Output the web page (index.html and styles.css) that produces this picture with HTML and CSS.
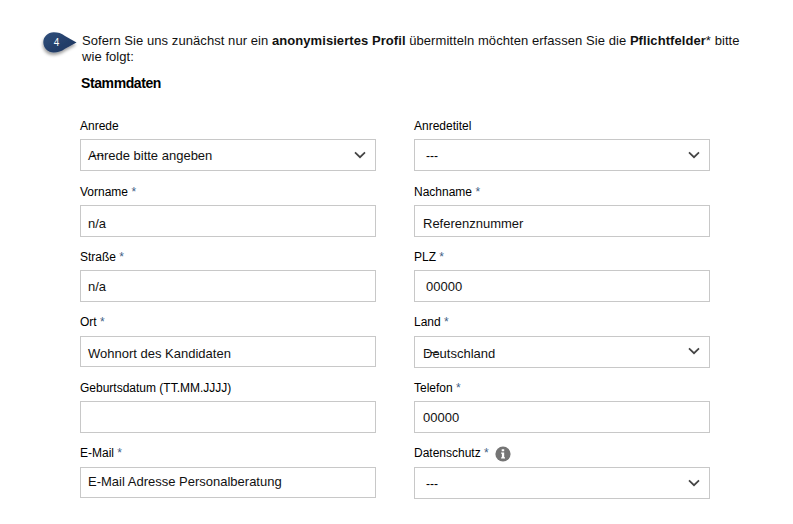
FILE: index.html
```
<!DOCTYPE html>
<html lang="de">
<head>
<meta charset="utf-8">
<title>Stammdaten</title>
<link rel="stylesheet" href="styles.css">
</head>
<body>
<main class="page">
  <header class="intro">
    <svg class="marker" width="40" height="32" viewBox="0 0 40 32">
      <defs>
        <linearGradient id="navy" x1="0" y1="0" x2="1" y2="1"><stop offset="0" stop-color="#304f7c"/><stop offset="1" stop-color="#1b335c"/></linearGradient>
        <filter id="shade" x="-30%" y="-30%" width="160%" height="170%"><feDropShadow dx="-0.5" dy="2.5" stdDeviation="1.7" flood-color="#000" flood-opacity=".38"/></filter>
      </defs>
      <path d="M36.500 12.400L25 6.100C21.500 3.200 18 2.300 13.800 2.300C7.800 2.300 3.300 6.700 3.300 12.300C3.300 18 7.800 22.500 13.800 22.500C18 22.500 21.500 21.300 25 18.700Z" fill="url(#navy)" filter="url(#shade)"/>
      <text class="marker-number" x="16.500" y="15.800" text-anchor="middle">4</text>
    </svg>
    <p class="intro-text">Sofern Sie uns zunächst nur ein <b>anonymisiertes Profil</b> übermitteln möchten erfassen Sie die <b>Pflichtfelder</b>* bitte<br>wie folgt:</p>
  </header>
  <h1 class="title">Stammdaten</h1>
  <form class="fields">
    <div class="field"><div class="label">Anrede</div>
      <div class="box"><span class="ghost">---</span><span class="value">Anrede bitte angeben</span><svg class="chevron" viewBox="0 0 12 8"><path d="M1 1.300L6 6.200L11 1.300"/></svg></div></div>
    <div class="field"><div class="label">Anredetitel</div>
      <div class="box"><span class="value dashes">---</span><svg class="chevron" viewBox="0 0 12 8"><path d="M1 1.300L6 6.200L11 1.300"/></svg></div></div>
    <div class="field"><div class="label">Vorname <i>*</i></div>
      <div class="box"><span class="value low">n/a</span></div></div>
    <div class="field"><div class="label">Nachname <i>*</i></div>
      <div class="box"><span class="value low nudge">Referenznummer</span></div></div>
    <div class="field"><div class="label">Straße <i>*</i></div>
      <div class="box"><span class="value">n/a</span></div></div>
    <div class="field"><div class="label">PLZ <i>*</i></div>
      <div class="box"><span class="value indent">00000</span></div></div>
    <div class="field"><div class="label raised">Ort <i>*</i></div>
      <div class="box short"><span class="value low">Wohnort des Kandidaten</span></div></div>
    <div class="field"><div class="label raised">Land <i>*</i></div>
      <div class="box"><span class="ghost">---</span><span class="value lower nudge">Deutschland</span><svg class="chevron chevron-high" viewBox="0 0 12 8"><path d="M1 1.300L6 6.200L11 1.300"/></svg></div></div>
    <div class="field"><div class="label">Geburtsdatum (TT.MM.JJJJ)</div>
      <div class="box"></div></div>
    <div class="field"><div class="label">Telefon <i>*</i></div>
      <div class="box"><span class="value nudge">00000</span></div></div>
    <div class="field"><div class="label raised">E-Mail <i>*</i></div>
      <div class="box short"><span class="value high">E-Mail Adresse Personalberatung</span></div></div>
    <div class="field"><div class="label raised">Datenschutz <i>*</i><svg class="info" viewBox="0 0 16 16"><circle cx="8" cy="8" r="7.600"/><path d="M6.700 3.300h2.500v2H6.700zM6.100 6.500h3.100v4.700h.8v1.300H6.100v-1.300h.8V7.800h-.8z"/></svg></div>
      <div class="box"><span class="value dashes">---</span><svg class="chevron" viewBox="0 0 12 8"><path d="M1 1.300L6 6.200L11 1.300"/></svg></div></div>
  </form>
</main>
</body>
</html>
```
FILE: styles.css
```
* { box-sizing: border-box; }
body { margin: 0; background: #fff; color: #111; font-family: "Liberation Sans", Arial, sans-serif; }
.page { padding: 30px 0 0 40px; }
.intro { display: flex; height: 43px; }
.marker { flex: none; width: 40px; height: 32px; overflow: visible; }
.marker-number { fill: #fff; font-size: 10px; }
.intro-text { margin: 3px 0 0 2px; font-size: 13px; line-height: 16px; letter-spacing: 0.065px; white-space: nowrap; }
.title { margin: 2px 0 0 41px; height: 44px; font-size: 14px; line-height: 16px; letter-spacing: -0.4px; color: #000; }
.fields { margin-left: 40px; display: grid; grid-template-columns: 296px 296px; column-gap: 38px; grid-template-rows: 66px 65px 66px 65px 66px 52px; }
.label { display: flex; align-items: center; height: 20px; padding-bottom: 6px; font-size: 12px; line-height: 14px; color: #000; white-space: pre; }
.label i { color: #3f6186; font-style: normal; }
.raised { height: 19px; margin: -1px 0 2px; padding-bottom: 5px; }
.box { position: relative; display: flex; align-items: center; height: 32px; padding: 1px 9px 0 7px; border: 1px solid #c8c8c8; }
.short { height: 31px; }
.value { flex: 1; font-size: 13px; line-height: 16px; white-space: nowrap; }
.low { padding-top: 4px; }
.lower { padding-top: 2px; }
.high { padding-bottom: 3px; }
.nudge { padding-left: 1px; }
.indent { padding-left: 4px; }
.dashes { padding-left: 4px; font-size: 12px; color: #000; }
.ghost { position: absolute; left: 11px; top: 8px; font-size: 12px; line-height: 14px; }
.chevron { flex: none; width: 12px; height: 8px; margin-bottom: 2px; fill: none; stroke: #444; stroke-width: 1.7; }
.chevron-high { margin-bottom: 4px; }
.info { width: 16px; height: 16px; margin: 2px 0 0 6px; fill: #757575; }
.info path { fill: #fff; }
```
